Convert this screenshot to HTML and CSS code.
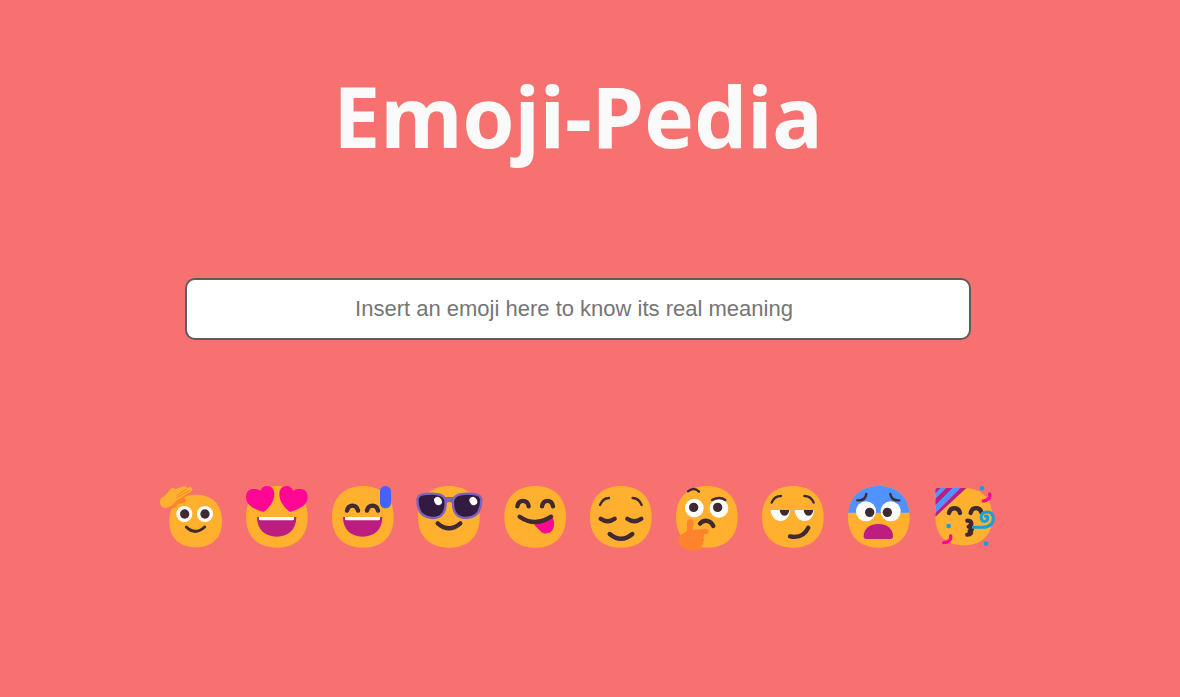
FILE: index.html
```
<!DOCTYPE html>
<html lang="en">
<head>
<meta charset="utf-8">
<meta name="viewport" content="width=device-width, initial-scale=1">
<title>Emoji-Pedia</title>
<link rel="stylesheet" href="styles.css">
</head>
<body>
<svg class="defs" width="0" height="0" aria-hidden="true">
  <defs>
    <path id="face" d="M126 33C184 33 218 69 218 126C218 184 184 218 126 218C68 218 33 184 33 126C33 69 68 33 126 33Z"/>
    <path id="heart" d="M84 110C58 103 33 91 33 66C33 50 43 42 56 42C66 42 73 44 76 47C80 38 87 33 96 33C110 33 118 43 118 57C118 79 104 96 90 108Q87 111 84 110Z"/>
    <g id="grin">
      <path fill="#bb1d80" d="M66 126H184C184 163 160 185 125 185C90 185 66 163 66 126Z"/>
      <path fill="#fff" d="M72 126H177V131Q177 136 172 136H77Q72 136 72 131Z"/>
    </g>
    <clipPath id="face-clip"><use href="#face"/></clipPath>
    <clipPath id="hat-clip"><path d="M44 39H130L37 125V46Q37 39 44 39Z"/></clipPath>
  </defs>
</svg>
<main class="page">
  <h1 class="title">Emoji-Pedia</h1>
  <input class="search" type="text" aria-label="Emoji" placeholder="Insert an emoji here to know its real meaning">
  <div class="emojis">
    <button class="emoji" type="button" aria-label="Saluting face"><svg viewBox="0 0 255 255">
      <path class="skin" d="M140 59C191 59 219 89 219 139C219 188 191 217 140 217C90 217 61 188 61 139C61 89 90 59 140 59Z"/>
      <path class="orange" d="M66 72L105 44L131 49L104 70Q113 73 109 80Q105 85 86 86Q83 101 61 100Z"/>
      <path class="skin" d="M33 82C32 71 39 67 46 64L65 42Q72 36 79 43L103 34Q113 32 115 39Q123 34 128 38Q133 45 125 50L103 64Q87 72 73 87Q60 99 47 99C38 98 33 91 33 82Z"/>
      <path class="stroke orange-line" d="M83 62L112 42M83 68L121 47"/>
      <circle class="white" cx="106" cy="117" r="24"/><circle class="white" cx="168" cy="117" r="24"/>
      <circle class="dark" cx="107" cy="117" r="14"/><circle class="dark" cx="168" cy="117" r="14"/>
      <path class="stroke w9" d="M112 156Q138 182 167 156"/>
    </svg></button>
    <button class="emoji" type="button" aria-label="Smiling face with heart eyes"><svg viewBox="0 0 255 255">
      <use class="skin" href="#face"/><use href="#grin"/>
      <use class="pink" href="#heart"/><use class="pink" href="#heart" transform="matrix(-1 0 0 1 251 0)"/>
    </svg></button>
    <button class="emoji" type="button" aria-label="Grinning face with sweat"><svg viewBox="0 0 255 255">
      <use class="skin" href="#face"/><use href="#grin"/>
      <path class="stroke w12" d="M78 107C82 87 107 87 111 107M138 107C142 87 167 87 171 107"/>
      <rect class="blue" x="177" y="33" width="33" height="67" rx="16"/>
    </svg></button>
    <button class="emoji" type="button" aria-label="Smiling face with sunglasses"><svg viewBox="0 0 255 255">
      <use class="skin" href="#face"/>
      <path class="frame" d="M108 66H146L139 88Q127 74 116 88Z"/>
      <path class="lens" d="M34 66Q38 56 74 56Q112 56 116 77Q119 129 75 129Q31 127 31 73ZM220 66Q216 56 180 56Q142 56 138 77Q135 129 179 129Q223 127 223 73Z"/>
      <ellipse class="white" cx="93" cy="78" rx="11" ry="13" transform="rotate(-30 93 78)"/>
      <ellipse class="white" cx="199" cy="78" rx="11" ry="13" transform="rotate(-30 199 78)"/>
      <path class="stroke w12" d="M92 145Q126 175 160 145"/>
    </svg></button>
    <button class="emoji" type="button" aria-label="Face savoring food"><svg viewBox="0 0 255 255">
      <use class="skin" href="#face" x="1"/>
      <path class="pink" d="M123 149L179 128Q187 145 181 160C175 177 154 179 145 171Z"/>
      <path class="stroke w12" d="M73 94C77 72 103 72 107 94M147 94C151 72 176 72 180 94M80 125Q126 157 174 125"/>
    </svg></button>
    <button class="emoji" type="button" aria-label="Relieved face"><svg viewBox="0 0 255 255">
      <use class="skin" href="#face"/>
      <path class="stroke w7" d="M63 90Q71 70 90 69M188 90Q180 70 161 69"/>
      <path class="stroke w12" d="M65 131Q86 146 107 131M145 131Q166 146 187 131M92 177Q126 206 160 177"/>
    </svg></button>
    <button class="emoji" type="button" aria-label="Thinking face"><svg viewBox="0 0 255 255">
      <use class="skin" href="#face"/>
      <circle class="white" cx="88" cy="99" r="28"/><circle class="white" cx="162" cy="100" r="28"/>
      <circle class="dark" cx="86" cy="97" r="14"/><circle class="dark" cx="158" cy="97" r="14"/>
      <path class="stroke w7" d="M69 49Q87 34 102 50M141 75Q164 63 181 75"/>
      <path class="stroke w12" d="M105 146C116 132 137 135 145 153"/>
      <path class="orange" d="M66 142Q67 133 76 133Q85 134 86 143L83 164L122 162Q131 162 132 170Q131 177 123 178H116Q119 183 115 188Q120 194 114 200Q117 208 110 211V224Q86 227 69 224Q40 218 40 196C39 181 53 178 66 167Z"/>
    </svg></button>
    <button class="emoji" type="button" aria-label="Smirking face"><svg viewBox="0 0 255 255">
      <use class="skin" href="#face"/>
      <path class="white" d="M59 105H117C116 149 62 149 59 105ZM131 105H189C188 149 134 149 131 105Z"/>
      <path class="dark" d="M86 105H115C113 128 88 128 86 105ZM158 105H187C185 128 160 128 158 105Z"/>
      <path class="stroke w7" d="M62 83Q70 63 90 63M188 83Q180 63 160 63"/>
      <path class="stroke w12" d="M117 184Q156 192 172 158"/>
    </svg></button>
    <button class="emoji" type="button" aria-label="Fearful face"><svg viewBox="0 0 255 255">
      <use class="skin" href="#face"/>
      <path class="sky" clip-path="url(#face-clip)" d="M32 32H220V113H32Z"/>
      <circle class="white" cx="87" cy="109" r="30"/><circle class="white" cx="161" cy="109" r="30"/>
      <circle class="dark" cx="98" cy="112" r="14"/><circle class="dark" cx="151" cy="112" r="14"/>
      <path class="stroke w7" d="M61 76Q85 78 88 57M187 76Q163 78 160 57"/>
      <path fill="#bb1d80" d="M80 184C80 160 99 147 124 147C149 147 168 160 168 184Q168 192 160 192H88Q80 192 80 184Z"/>
    </svg></button>
    <button class="emoji" type="button" aria-label="Partying face"><svg viewBox="0 0 255 255">
      <path class="skin" d="M122 39C177 39 208 71 208 126C208 180 177 211 122 211C68 211 37 180 37 126V60L65 40Z"/>
      <g clip-path="url(#hat-clip)">
        <path fill="#5092ff" d="M36 38H132V126H36Z"/>
        <path class="stripes" d="M10 72L72 10M10 108L108 10M10 151L151 10"/>
      </g>
      <path class="stroke w12" d="M78 114C82 95 107 95 111 114M143 114C147 95 171 95 175 112"/>
      <path class="stroke w12" d="M133 137C147 137 149 150 137 155C149 158 149 165 140 168C147 173 144 179 133 179"/>
      <path class="stroke horn" d="M151 157H180C201 157 212 143 211 129C209 114 199 110 190 111C176 112 171 124 176 134C183 145 196 138 194 127Q192 121 187 124"/>
      <path class="stroke streamer" d="M200 57C203 69 194 77 181 78M83 183C85 195 76 203 62 203"/>
      <circle class="cyan" cx="177" cy="40" r="7"/><circle class="cyan" cx="77" cy="153" r="7"/><circle class="cyan" cx="189" cy="206" r="7"/>
    </svg></button>
  </div>
</main>
</body>
</html>
```
FILE: styles.css
```
* {
  box-sizing: border-box;
}

body {
  margin: 0;
  min-height: 100vh;
  background: #f87171;
}

.defs {
  position: absolute;
}

.page {
  display: flex;
  flex-direction: column;
  align-items: center;
  padding: 56px 24px 56px 0;
}

.title {
  margin: 0;
  color: #fafafa;
  font: bold 84px/120px "Segoe UI", "Noto Sans", "Open Sans", sans-serif;
}

.search {
  width: 68%;
  height: 62px;
  margin-top: 102px;
  padding: 0 8px 0 0;
  border: 2px solid #5c5c5c;
  border-radius: 10px;
  background: #fff;
  color: #222;
  font: 22px "Liberation Sans", Arial, sans-serif;
  text-align: center;
}

.search::placeholder {
  color: #757575;
  opacity: 1;
}

.emojis {
  display: flex;
  flex-wrap: wrap;
  justify-content: center;
  gap: 1px;
  margin-top: 135px;
}

.emoji {
  display: block;
  width: 85px;
  padding: 0;
  border: 0;
  background: none;
  cursor: pointer;
}

.emoji svg {
  display: block;
  width: 100%;
}

.skin { fill: #ffb02e; }
.orange { fill: #ff822d; }
.white { fill: #fff; }
.dark { fill: #402a32; }
.pink { fill: #ff0695; }
.blue { fill: #4661ff; }
.sky { fill: #5092ff; }
.cyan { fill: #169fdc; }
.frame { fill: #8061bd; }

.lens {
  fill: #321b41;
  stroke: #8061bd;
  stroke-width: 7;
}

.stripes {
  fill: none;
  stroke: #bb1d80;
  stroke-width: 13;
}

.stroke {
  fill: none;
  stroke: #402a32;
  stroke-linecap: round;
  stroke-linejoin: round;
}

.w7 { stroke-width: 7; }
.w9 { stroke-width: 9; }
.w12 { stroke-width: 13; }

.orange-line {
  stroke: #ff822d;
  stroke-width: 3;
}

.horn {
  stroke: #169fdc;
  stroke-width: 9;
}

.streamer {
  stroke: #ff0695;
  stroke-width: 10;
}
```
